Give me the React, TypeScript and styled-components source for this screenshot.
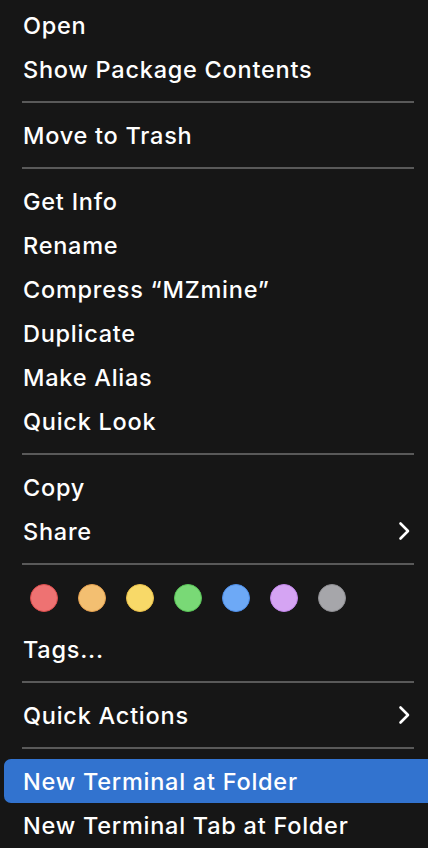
import React from "react";
import styled, { createGlobalStyle } from "styled-components";

const Global = createGlobalStyle`
  html, body { margin: 0; padding: 0; background: #161616; }
  body { font-family: Inter, "Noto Sans", "Liberation Sans", sans-serif; -webkit-font-smoothing: antialiased; }
`;

const Menu = styled.div`
  width: 428px;
  height: 848px;
  overflow: hidden;
  background: #161616;
  padding-top: 3px;
  box-sizing: border-box;
  display: flex;
  flex-direction: column;
`;

const Item = styled.div<{ $active?: boolean }>`
  height: 44px;
  flex: 0 0 44px;
  margin-left: 4px;
  padding-left: 19px;
  padding-right: 17px;
  display: flex;
  align-items: center;
  justify-content: space-between;
  color: #ffffff;
  font-size: 23.5px;
  font-weight: 500;
  letter-spacing: 0.75px;
  border-radius: 7px 0 0 7px;
  background: ${(p) => (p.$active ? "#3273cf" : "transparent")};
`;

const Separator = styled.div`
  flex: 0 0 22px;
  display: flex;
  align-items: center;
  padding: 0 14px 0 22px;
  &::after {
    content: "";
    display: block;
    height: 2px;
    width: 100%;
    background: #595959;
  }
`;

const TagRow = styled.div`
  flex: 0 0 52px;
  display: flex;
  gap: 20px;
  padding: 9px 0 0 30px;
  box-sizing: border-box;
`;

const Dot = styled.span<{ $fill: string; $ring: string }>`
  width: 28px;
  height: 28px;
  border-radius: 50%;
  box-sizing: border-box;
  background: ${(p) => p.$fill};
  border: 1.5px solid ${(p) => p.$ring};
`;

const Chevron = () => (
  <svg width="13" height="20" viewBox="0 0 13 20" fill="none">
    <path d="M2.5 2.5 L10 10 L2.5 17.5" stroke="#ffffff" strokeWidth="2.6" strokeLinecap="round" strokeLinejoin="round" />
  </svg>
);

const tags = [
  ["#ee7272", "#dc4c4c"],
  ["#f3bf71", "#e4a04f"],
  ["#f8d968", "#eac04a"],
  ["#79d976", "#58c457"],
  ["#6da9f6", "#4d8ee9"],
  ["#d5a4f3", "#c184ea"],
  ["#a6a6aa", "#8e8e92"],
];

export default function App() {
  return (
    <>
      <Global />
      <Menu>
        <Item>Open</Item>
        <Item>Show Package Contents</Item>
        <Separator />
        <Item>Move to Trash</Item>
        <Separator />
        <Item>Get Info</Item>
        <Item>Rename</Item>
        <Item>Compress “MZmine”</Item>
        <Item>Duplicate</Item>
        <Item>Make Alias</Item>
        <Item>Quick Look</Item>
        <Separator />
        <Item>Copy</Item>
        <Item>
          Share
          <Chevron />
        </Item>
        <Separator />
        <TagRow>
          {tags.map(([f, r]) => (
            <Dot key={f} $fill={f} $ring={r} />
          ))}
        </TagRow>
        <Item>Tags...</Item>
        <Separator />
        <Item>
          Quick Actions
          <Chevron />
        </Item>
        <Separator />
        <Item $active>New Terminal at Folder</Item>
        <Item>New Terminal Tab at Folder</Item>
      </Menu>
    </>
  );
}
